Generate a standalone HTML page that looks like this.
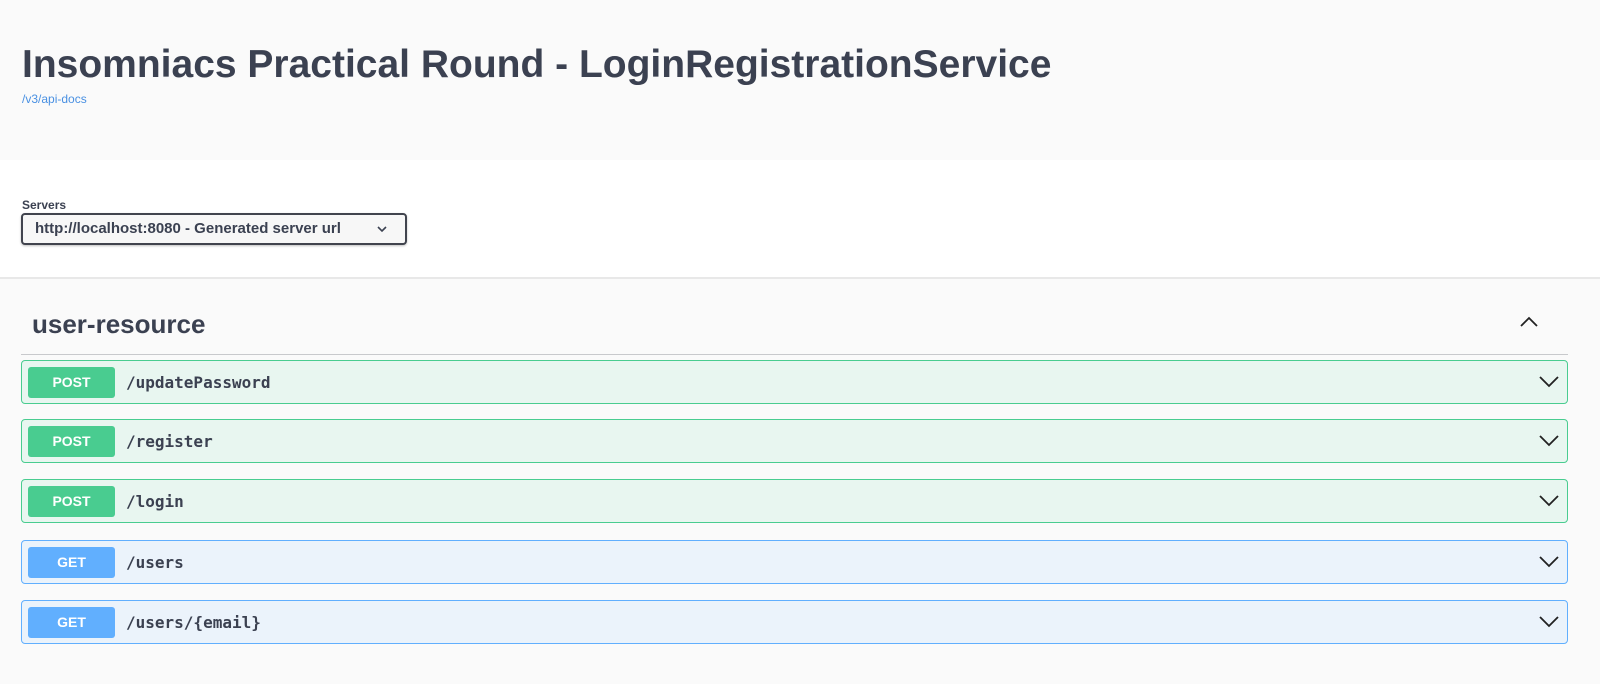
<!DOCTYPE html>
<html><head><style>
*{box-sizing:border-box;margin:0;padding:0}
body{width:1600px;height:684px;background:#fff;font-family:"Liberation Sans",sans-serif;color:#3b4151;overflow:hidden;position:relative}
.wrap{position:absolute;left:0;top:0;width:1600px;height:684px}
.hdr{position:absolute;left:0;top:0;width:1600px;height:160px;background:#fafafa}
h1{position:absolute;left:22px;top:43px;font-size:39px;font-weight:bold;color:#3b4151}
.link{position:absolute;left:22px;top:92px;font-size:12px;color:#4990e2}
.srv{position:absolute;left:0;top:160px;width:1600px;height:119px;background:#fff;border-bottom:2px solid #e8e8e8}
.lbl{position:absolute;left:22px;top:38px;font-size:12px;font-weight:bold}
.sel{position:absolute;left:21px;top:53px;width:386px;height:32px;border:2px solid #41444e;border-radius:4px;background:#f7f7f7;font-size:15px;font-weight:bold;padding:5px 0 0 12px;box-shadow:0 1px 2px rgba(0,0,0,.25)}
.sel svg{position:absolute;right:18px;top:11px}
.main{position:absolute;left:0;top:279px;width:1600px;height:405px;background:#fafafa}
.tag{position:absolute;left:32px;top:30px;font-size:26px;font-weight:bold}
.tline{position:absolute;left:21px;top:75px;width:1547px;height:1px;background:#c8c9cc}
.up{position:absolute;left:1520px;top:37px}
.op{position:absolute;left:21px;width:1547px;height:44px;border:1px solid;border-radius:4px}
.post{background:#e8f6f0;border-color:#49cc90}
.get{background:#ebf3fb;border-color:#61affe}
.b{position:absolute;left:6px;top:6px;width:87px;height:31px;border-radius:3px;color:#fff;font-weight:bold;font-size:14px;text-align:center;line-height:31px}
.post .b{background:#49cc90}.get .b{background:#61affe}
.p{position:absolute;left:104px;top:12px;font-family:"DejaVu Sans Mono","Liberation Mono",monospace;font-size:16px;font-weight:bold;color:#3b4151}
.op svg{position:absolute;right:8px;top:15px}
</style></head><body><div class="wrap">
<div class="hdr"><h1>Insomniacs Practical Round - LoginRegistrationService</h1><div class="link">/v3/api-docs</div></div>
<div class="srv"><div class="lbl">Servers</div><div class="sel">http://localhost:8080 - Generated server url<svg width="10" height="7" viewBox="0 0 10 7"><path d="M1 1l4 4 4-4" fill="none" stroke="#3b4151" stroke-width="1.6"/></svg></div></div>
<div class="main">
<div class="tag">user-resource</div>
<svg class="up" width="18" height="11" viewBox="0 0 18 11"><path d="M1 10l8-8 8 8" fill="none" stroke="#222" stroke-width="1.8"/></svg>
<div class="tline"></div>
<div class="op post" style="top:81px"><div class="b">POST</div><div class="p">/updatePassword</div><svg width="20" height="12" viewBox="0 0 20 12"><path d="M1 1l9 9 9-9" fill="none" stroke="#222" stroke-width="1.8"/></svg></div>
<div class="op post" style="top:140px"><div class="b">POST</div><div class="p">/register</div><svg width="20" height="12" viewBox="0 0 20 12"><path d="M1 1l9 9 9-9" fill="none" stroke="#222" stroke-width="1.8"/></svg></div>
<div class="op post" style="top:200px"><div class="b">POST</div><div class="p">/login</div><svg width="20" height="12" viewBox="0 0 20 12"><path d="M1 1l9 9 9-9" fill="none" stroke="#222" stroke-width="1.8"/></svg></div>
<div class="op get" style="top:261px"><div class="b">GET</div><div class="p">/users</div><svg width="20" height="12" viewBox="0 0 20 12"><path d="M1 1l9 9 9-9" fill="none" stroke="#222" stroke-width="1.8"/></svg></div>
<div class="op get" style="top:321px"><div class="b">GET</div><div class="p">/users/{email}</div><svg width="20" height="12" viewBox="0 0 20 12"><path d="M1 1l9 9 9-9" fill="none" stroke="#222" stroke-width="1.8"/></svg></div>
</div>
</div></body></html>
